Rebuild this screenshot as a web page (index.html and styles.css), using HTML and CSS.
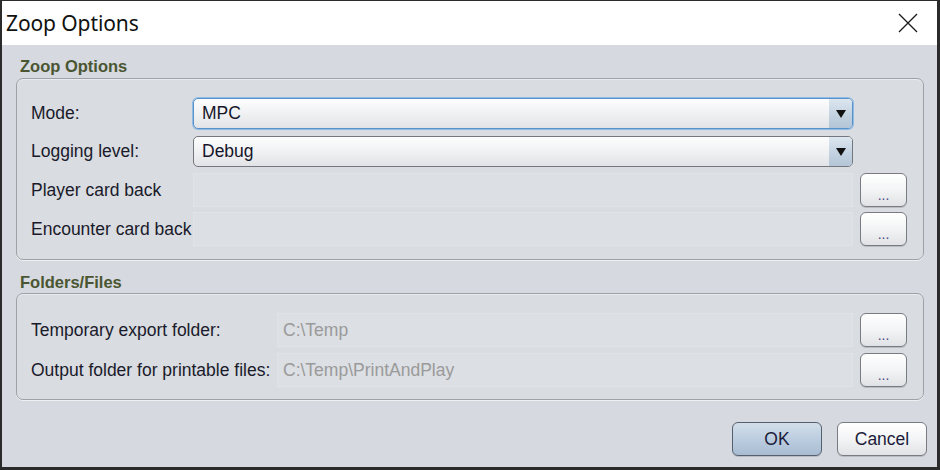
FILE: index.html
```html
<!DOCTYPE html>
<html>
<head>
<meta charset="utf-8">
<link rel="stylesheet" href="styles.css">
</head>
<body>
<div class="window">
  <div class="titlebar">
    <span class="title">Zoop Options</span>
    <svg class="close" width="20" height="20" viewBox="0 0 20 20"><path d="M1 1 L19 19 M19 1 L1 19" stroke="#1a1a1a" stroke-width="1.3" fill="none"/></svg>
  </div>
  <div class="content">
    <div class="section-title">Zoop Options</div>
    <div class="panel panel-opts">
      <div class="label">Mode:</div>
      <div class="combo focused"><span class="combo-text">MPC</span><span class="combo-arrow"><svg width="10" height="8" viewBox="0 0 10 8"><path d="M0 0 H10 L5 8 Z" fill="#111"/></svg></span></div>
      <div></div>
      <div class="label">Logging level:</div>
      <div class="combo"><span class="combo-text">Debug</span><span class="combo-arrow"><svg width="10" height="8" viewBox="0 0 10 8"><path d="M0 0 H10 L5 8 Z" fill="#111"/></svg></span></div>
      <div></div>
      <div class="label">Player card back</div>
      <div class="field"></div>
      <button class="btn dots">...</button>
      <div class="label">Encounter card back</div>
      <div class="field"></div>
      <button class="btn dots">...</button>
    </div>
    <div class="section-title second">Folders/Files</div>
    <div class="panel panel-files">
      <div class="label">Temporary export folder:</div>
      <div class="field">C:\Temp</div>
      <button class="btn dots">...</button>
      <div class="label">Output folder for printable files:</div>
      <div class="field">C:\Temp\PrintAndPlay</div>
      <button class="btn dots">...</button>
    </div>
    <div class="actions">
      <button class="btn action primary">OK</button>
      <button class="btn action">Cancel</button>
    </div>
  </div>
</div>
</body>
</html>
```
FILE: styles.css
```css
html, body {
  margin: 0;
  padding: 0;
  background: #2a2a2a;
}
.window {
  width: 940px;
  height: 470px;
  box-sizing: border-box;
  border-style: solid;
  border-color: #2b2b2b;
  border-width: 1px 3px 3px 2px;
  display: flex;
  flex-direction: column;
  background: #d6d9df;
  font-family: "Liberation Sans", Arial, sans-serif;
  font-size: 17.5px;
  color: #1c1c2c;
}
.titlebar {
  height: 44px;
  flex: none;
  background: #ffffff;
  display: flex;
  align-items: center;
  justify-content: space-between;
  padding: 0 19px 0 4px;
}
.title {
  font-family: "Noto Sans", "Open Sans", sans-serif;
  font-size: 21px;
  color: #111;
  letter-spacing: -0.1px;
}
.close {
  display: block;
}
.content {
  flex: 1;
  display: flex;
  flex-direction: column;
  padding: 11px 13px 0 14px;
}
.section-title {
  font-weight: bold;
  font-size: 16.5px;
  color: #4a5532;
  line-height: 21px;
  height: 21px;
  padding-left: 4px;
  margin-bottom: 1px;
}
.section-title.second {
  margin-top: 12px;
  margin-bottom: 0;
}
.panel {
  border: 1px solid #9ea2a8;
  border-radius: 7px;
  background: #d9dce1;
  box-shadow: inset 0 1px 0 #e9ebee, 0 1px 0 #eef0f2;
  display: grid;
  column-gap: 7px;
  align-items: center;
}
.panel-opts {
  padding: 18px 16px 13px 14px;
  grid-template-columns: 155px 1fr 47px;
  grid-template-rows: 33px 33px 34px 34px;
  row-gap: 5px;
}
.panel-files {
  padding: 19px 16px 12px 14px;
  grid-template-columns: 239px 1fr 47px;
  grid-template-rows: 34px 34px;
  row-gap: 6px;
}
.label {
  white-space: nowrap;
  color: #1a1a2a;
}
.combo {
  height: 31px;
  box-sizing: border-box;
  border: 1px solid #74787e;
  border-radius: 5px;
  background: linear-gradient(#fdfdfd, #eff0f2 55%, #e1e3e6);
  display: flex;
  align-items: center;
  overflow: hidden;
}
.combo.focused {
  border-color: #5792cb;
  box-shadow: 0 0 0 1px #92bbe3;
}
.combo-text {
  flex: 1;
  padding-left: 8px;
  color: #16162a;
}
.combo-arrow {
  width: 23px;
  align-self: stretch;
  background: linear-gradient(#dde6ef, #c3d2e1 55%, #b3c5d7);
  display: flex;
  align-items: center;
  justify-content: center;
}
.combo-arrow svg {
  display: block;
  margin-left: 1px;
}
.field {
  height: 34px;
  box-sizing: border-box;
  border: 1px solid #e1e3e6;
  background: #dcdfe3;
  color: #9a9a9a;
  padding-left: 5px;
  display: flex;
  align-items: center;
  white-space: nowrap;
}
.btn {
  font-family: "Liberation Sans", Arial, sans-serif;
  box-sizing: border-box;
  border: 1px solid #787c82;
  border-radius: 6px;
  background: linear-gradient(#ffffff, #f3f4f5 50%, #e0e2e5);
  box-shadow: 0 1px 0 #b9bcc1;
  color: #1c1c3a;
  padding: 0;
  margin: 0;
}
.dots {
  height: 34px;
  font-size: 14px;
  line-height: 1;
  padding-top: 10px;
  color: #4a4a8a;
  letter-spacing: 0;
}
.actions {
  display: flex;
  justify-content: flex-end;
  gap: 15px;
  margin-top: 22px;
  margin-right: -3px;
}
.action {
  width: 90px;
  height: 34px;
  font-size: 17.5px;
}
.primary {
  border-color: #55606e;
  background: linear-gradient(#d3dfea, #bccde0 50%, #a8bcd2);
}
```
